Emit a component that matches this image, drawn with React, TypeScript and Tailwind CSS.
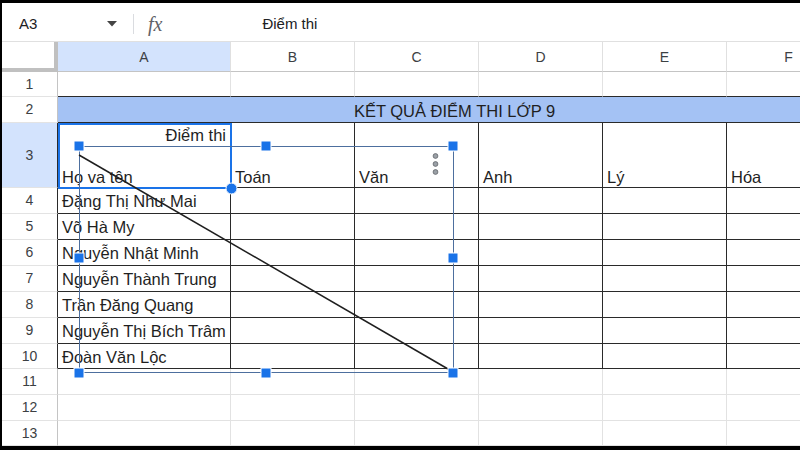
import React from 'react'

const COLS = [
  { key: 'A', w: 'w-[173px]' },
  { key: 'B', w: 'w-[124px]' },
  { key: 'C', w: 'w-[124px]' },
  { key: 'D', w: 'w-[124px]' },
  { key: 'E', w: 'w-[124px]' },
  { key: 'F', w: 'w-[124px]' },
]

const SUBJECTS = ['Toán', 'Văn', 'Anh', 'Lý', 'Hóa']

const STUDENTS = [
  { n: 4, name: 'Đặng Thị Như Mai', h: 'h-[26px]' },
  { n: 5, name: 'Võ Hà My', h: 'h-[26px]' },
  { n: 6, name: 'Nguyễn Nhật Minh', h: 'h-[26px]' },
  { n: 7, name: 'Nguyễn Thành Trung', h: 'h-[26px]' },
  { n: 8, name: 'Trần Đăng Quang', h: 'h-[26px]' },
  { n: 9, name: 'Nguyễn Thị Bích Trâm', h: 'h-[26px]' },
  { n: 10, name: 'Đoàn Văn Lộc', h: 'h-[25px]' },
]

const EMPTY = [
  { n: 11, h: 'h-[26px]' },
  { n: 12, h: 'h-[26px]' },
  { n: 13, h: 'h-[25px]' },
]

function RowHead({ n, dark, active }: { n: number; dark?: boolean; active?: boolean }) {
  return (
    <div
      className={
        'w-[56px] shrink-0 flex items-center justify-center text-[14px] text-[#3c4043] border-r border-b border-[#e3e3e3] ' +
        (dark ? 'border-r-[#2a2a2a] ' : 'border-r-[#c4c4c4] ') +
        (active ? 'bg-[#d3e3fd]' : 'bg-white')
      }
    >
      {n}
    </div>
  )
}

// handles of the selected drawing
const HANDLES: [number, number][] = [
  [79, 146], [266, 146], [453, 146],
  [79, 258], [453, 258],
  [79, 373], [266, 373], [453, 373],
]

export default function App() {
  return (
    <div className="relative w-[800px] h-[450px] bg-black pt-[3px] pl-[2px] pb-[4px] overflow-hidden font-['Liberation_Sans',Arial,sans-serif] text-[#1f1f1f]">
      <div className="w-full h-full bg-white flex flex-col overflow-hidden">
        {/* Formula bar */}
        <div className="h-[39px] shrink-0 flex items-center pt-[4px] border-b border-[#e0e0e0]">
          <div className="w-[126px] flex items-center justify-between pl-[17px] pr-[11px]">
            <span className="text-[15px] text-[#202124]">A3</span>
            <svg width="10" height="6" viewBox="0 0 10 6" fill="#444">
              <path d="M0 0h10L5 5.5z" />
            </svg>
          </div>
          <div className="ml-[5px] w-px h-[20px] bg-[#dadce0]" />
          <span className="ml-[14px] text-[20px] italic text-[#5f6368] font-['Liberation_Serif',serif] leading-none">
            fx
          </span>
          <span className="ml-[100px] text-[15px] text-[#202124]">Điểm thi</span>
        </div>

        {/* Column headers */}
        <div className="h-[30px] shrink-0 flex">
          <div className="w-[56px] shrink-0 bg-white border-r-4 border-b-4 border-[#c0c0c0]" />
          {COLS.map((c) => (
            <div
              key={c.key}
              className={
                c.w +
                ' shrink-0 flex items-center justify-center pt-[1px] text-[14px] text-[#3c4043] border-r border-b border-[#e0e0e0] border-b-[#c4c4c4] ' +
                (c.key === 'A' ? 'bg-[#d3e3fd]' : 'bg-white')
              }
            >
              {c.key}
            </div>
          ))}
        </div>

        {/* Row 1 */}
        <div className="h-[25px] shrink-0 flex">
          <RowHead n={1} />
          {COLS.map((c) => (
            <div key={c.key} className={c.w + ' shrink-0 border-r border-b border-[#e2e2e2] border-b-[#2a2a2a]'} />
          ))}
        </div>

        {/* Row 2 - merged title */}
        <div className="h-[26px] shrink-0 flex">
          <RowHead n={2} />
          <div className="w-[793px] shrink-0 flex items-center justify-center pt-[3px] bg-[#a4c2f4] border-b border-[#2a2a2a] text-[16.5px]">
            KẾT QUẢ ĐIỂM THI LỚP 9
          </div>
        </div>

        {/* Row 3 - headings */}
        <div className="h-[65px] shrink-0 flex">
          <RowHead n={3} dark active />
          <div className="w-[173px] shrink-0 flex flex-col justify-between border-r border-b border-[#2a2a2a] px-[4px] pt-[3px] pb-[1px] text-[16.5px] leading-[18px]">
            <span className="self-end">Điểm thi</span>
            <span>Họ va tên</span>
          </div>
          {SUBJECTS.map((s) => (
            <div
              key={s}
              className="w-[124px] shrink-0 flex items-end border-r border-b border-[#2a2a2a] px-[4px] pb-[1px] text-[16.5px] leading-[18px]"
            >
              {s}
            </div>
          ))}
        </div>

        {/* Student rows */}
        {STUDENTS.map((r) => (
          <div key={r.n} className={r.h + ' shrink-0 flex'}>
            <RowHead n={r.n} dark />
            {COLS.map((c) => (
              <div
                key={c.key}
                className={c.w + ' shrink-0 flex items-center pt-[2px] border-r border-b border-[#2a2a2a] px-[4px] text-[16.5px] whitespace-nowrap'}
              >
                {c.key === 'A' ? r.name : ''}
              </div>
            ))}
          </div>
        ))}

        {/* Empty rows */}
        {EMPTY.map((r) => (
          <div key={r.n} className={r.h + ' shrink-0 flex'}>
            <RowHead n={r.n} />
            {COLS.map((c) => (
              <div key={c.key} className={c.w + ' shrink-0 border-r border-b border-[#e2e2e2]'} />
            ))}
          </div>
        ))}
      </div>

      {/* Selection + drawing overlay */}
      <svg className="absolute inset-0 pointer-events-none" width="800" height="450" viewBox="0 0 800 450">
        <rect x="59" y="124" width="172" height="64" fill="none" stroke="#1a73e8" strokeWidth="2" />
        <rect x="79.5" y="146.5" width="374" height="226" fill="none" stroke="#4d6f9e" strokeWidth="1" />
        <line x1="79" y1="155" x2="448" y2="369" stroke="#1f1f1f" strokeWidth="1.5" />
        <circle cx="231.5" cy="188.5" r="5.5" fill="#1a73e8" stroke="#fff" strokeWidth="1" />
        {HANDLES.map(([x, y]) => (
          <rect key={x + '-' + y} x={x - 5} y={y - 5} width="10" height="10" fill="#1a73e8" stroke="#fff" strokeWidth="1" />
        ))}
        {[156, 164, 172].map((y) => (
          <circle key={y} cx="435.5" cy={y} r="2.4" fill="#9aa0a6" stroke="#5f6368" strokeWidth="0.8" />
        ))}
      </svg>
    </div>
  )
}
